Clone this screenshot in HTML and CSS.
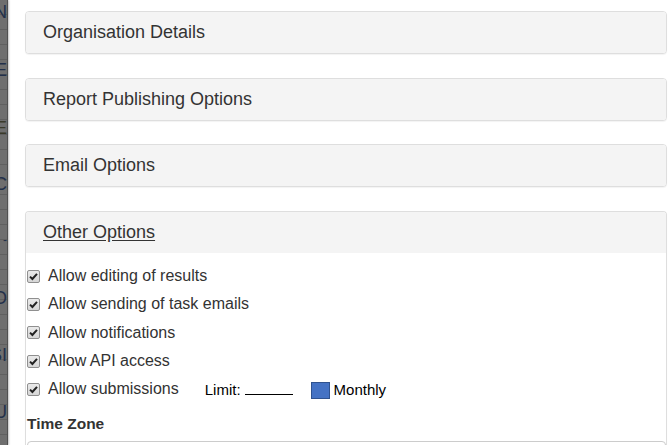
FILE: index.html
```html
<!DOCTYPE html>
<html>
<head>
<meta charset="utf-8">
<link rel="stylesheet" href="styles.css">
</head>
<body>
<div class="page">
  <div class="backdrop">
    <span class="bg-letter l1">N</span>
    <span class="bg-letter l2">SE</span>
    <span class="bg-letter l3">E</span>
    <span class="bg-letter l4">C</span>
    <span class="bg-letter l5">-</span>
    <span class="bg-letter l6">O</span>
    <span class="bg-letter l7">SI</span>
    <span class="bg-letter l8">U</span>
  </div>
  <main class="content">
    <section class="panel">
      <div class="panel-heading">Organisation Details</div>
    </section>
    <section class="panel">
      <div class="panel-heading">Report Publishing Options</div>
    </section>
    <section class="panel">
      <div class="panel-heading">Email Options</div>
    </section>
    <section class="panel panel-open">
      <div class="panel-heading"><span class="active-title">Other Options</span></div>
      <div class="panel-body">
        <label class="check-row"><span class="cb"><svg viewBox="0 0 13 13" width="13" height="13"><path d="M3 6.6 L5.4 9 L10 3.8" fill="none" stroke="#222" stroke-width="2"/></svg></span>Allow editing of results</label>
        <label class="check-row"><span class="cb"><svg viewBox="0 0 13 13" width="13" height="13"><path d="M3 6.6 L5.4 9 L10 3.8" fill="none" stroke="#222" stroke-width="2"/></svg></span>Allow sending of task emails</label>
        <label class="check-row"><span class="cb"><svg viewBox="0 0 13 13" width="13" height="13"><path d="M3 6.6 L5.4 9 L10 3.8" fill="none" stroke="#222" stroke-width="2"/></svg></span>Allow notifications</label>
        <label class="check-row"><span class="cb"><svg viewBox="0 0 13 13" width="13" height="13"><path d="M3 6.6 L5.4 9 L10 3.8" fill="none" stroke="#222" stroke-width="2"/></svg></span>Allow API access</label>
        <div class="check-row"><span class="cb"><svg viewBox="0 0 13 13" width="13" height="13"><path d="M3 6.6 L5.4 9 L10 3.8" fill="none" stroke="#222" stroke-width="2"/></svg></span>Allow submissions
          <span class="limit">Limit: <span class="blank"></span></span>
          <span class="swatch"></span><span class="monthly">Monthly</span>
        </div>
        <div class="field-label">Time Zone</div>
        <div class="select-box"></div>
      </div>
    </section>
  </main>
</div>
</body>
</html>
```
FILE: styles.css
```css
* { box-sizing: border-box; }
html, body { margin: 0; padding: 0; background: #fff; }
body {
  font-family: "Liberation Sans", Arial, sans-serif;
  color: #333;
  width: 669px;
  height: 445px;
  overflow: hidden;
}
.page {
  display: flex;
  height: 445px;
  overflow: hidden;
}
.backdrop {
  position: relative;
  width: 8px;
  flex: 0 0 8px;
  overflow: hidden;
  background-color: #6e6e6e;
  background-image: repeating-linear-gradient(to bottom, transparent 0, transparent 14px, #5f5f5f 14px, #5f5f5f 15px);
  border-right: 1px solid #505050;
  box-shadow: 1px 0 2px rgba(0,0,0,0.25);
}
.bg-letter {
  position: absolute;
  right: 0;
  font-size: 18px;
  line-height: 20px;
  color: #22304a;
}
.l1 { top: 2px; }
.l2 { top: 60px; }
.l3 { top: 118px; color: #3a3a2a; }
.l4 { top: 174px; }
.l5 { top: 230px; font-size: 12px; }
.l6 { top: 288px; }
.l7 { top: 345px; }
.l8 { top: 402px; }
.content {
  flex: 1;
  padding: 11px 2px 0 17px;
  display: flex;
  flex-direction: column;
  gap: 23.67px;
  overflow: hidden;
}
.panel {
  border: 1px solid #dedede;
  border-radius: 4px;
  background: #fff;
  box-shadow: 0 1px 1px rgba(0,0,0,0.05);
  flex: 0 0 auto;
}
.panel-heading {
  background: #f4f4f4;
  height: 41px;
  padding: 0 17px;
  display: flex;
  align-items: center;
  font-size: 18px;
  color: #333;
  border-radius: 3px;
}
.panel-open {
  flex: 1 0 auto;
  border-bottom: none;
  border-radius: 4px 4px 0 0;
}
.panel-open .panel-heading {
  border-radius: 3px 3px 0 0;
}
.active-title {
  text-decoration: underline;
  text-underline-offset: 2px;
}
.panel-body {
  padding: 9px 0 0 1px;
}
.check-row {
  display: flex;
  align-items: center;
  height: 28.3px;
  font-size: 16px;
  color: #333;
}
.cb {
  width: 13px;
  height: 13px;
  border: 1px solid #8f8f8f;
  border-radius: 2px;
  background: linear-gradient(#eaeaea, #d6d6d6);
  margin-right: 8px;
  display: inline-flex;
  align-items: center;
  justify-content: center;
  position: relative;
  flex: 0 0 13px;
}
.cb svg {
  position: absolute;
  left: -1px;
  top: -1px;
}
.limit {
  font-size: 15px;
  color: #000;
  margin-left: 26px;
  display: inline-flex;
  align-items: baseline;
}
.blank {
  display: inline-block;
  width: 48px;
  height: 1px;
  border-bottom: 1px solid #000;
  margin-left: 4px;
}
.swatch {
  width: 19px;
  height: 17px;
  background: #4472c4;
  border: 1px solid #2f528f;
  margin-left: 18px;
  margin-top: 2px;
  flex: 0 0 19px;
}
.monthly {
  font-size: 15px;
  color: #000;
  margin-left: 4px;
}
.field-label {
  font-weight: bold;
  font-size: 15.5px;
  margin-top: 11px;
  line-height: 20px;
}
.select-box {
  margin-top: 7px;
  height: 30px;
  border: 1px solid #ccc;
  border-radius: 4px;
}
```
